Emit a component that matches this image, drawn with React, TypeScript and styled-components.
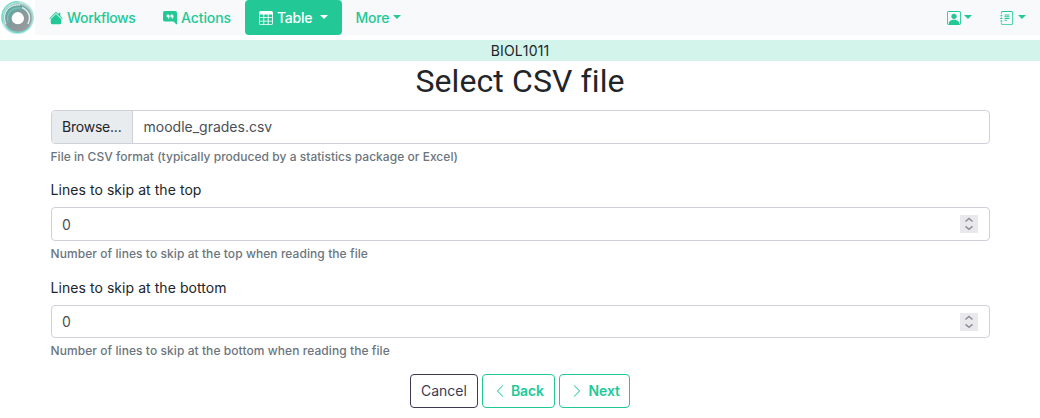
import React from "react";
import styled, { createGlobalStyle } from "styled-components";
import {
  BsHouseFill,
  BsChatRightQuoteFill,
  BsTable,
  BsPersonSquare,
  BsJournalText,
  BsChevronLeft,
  BsChevronRight,
} from "react-icons/bs";

const green = "#22c997";

const GlobalStyle = createGlobalStyle`
  *, *::before, *::after { box-sizing: border-box; }
  body {
    margin: 0;
    background: #fff;
    color: #212529;
    font: 400 14px/21px Inter, "Liberation Sans", sans-serif;
  }
`;

const Header = styled.header`
  display: flex;
  height: 35px;
  margin-bottom: 5px;
`;

const Brand = styled.a`
  width: 35px;
  height: 35px;
  svg { display: block; }
`;

const Nav = styled.nav`
  flex: 1;
  display: flex;
  background: #f8f9fa;
`;

const NavItem = styled.a<{ $active?: boolean; $width: number; $pad?: number; $track?: number }>`
  display: flex;
  align-items: center;
  width: ${(p) => p.$width}px;
  height: 35px;
  padding-left: ${(p) => p.$pad ?? 14}px;
  border-radius: 4px;
  color: ${(p) => (p.$active ? "#fff" : green)};
  background: ${(p) => (p.$active ? green : "transparent")};
  font-weight: 500;
  letter-spacing: ${(p) => p.$track ?? 0}px;
  white-space: nowrap;
  svg { flex: none; margin-right: 4px; }
`;

const Caret = styled.span<{ $gap: number }>`
  margin-left: ${(p) => p.$gap}px;
  margin-bottom: 1px;
  border-top: 4px solid currentColor;
  border-left: 4px solid transparent;
  border-right: 4px solid transparent;
`;

const NavEnd = styled.div`
  display: flex;
  margin-left: auto;
`;

const CourseBar = styled.div`
  height: 21px;
  background: #d3f4ea;
  text-align: center;
  letter-spacing: 0.15px;
  font-kerning: none;
`;

const Title = styled.h1`
  margin: 0 0 9px;
  padding-top: 1px;
  font: 400 32px/39px Roboto, sans-serif;
  letter-spacing: 0.1px;
  text-align: center;
`;

const Form = styled.form`
  margin: 0 50px 0 51px;
`;

const Field = styled.div<{ $height: number }>`
  height: ${(p) => p.$height}px;
`;

const Label = styled.label`
  display: block;
  height: 28px;
  line-height: 22px;
  letter-spacing: 0.06px;
  margin-left: -0.5px;
`;

const Control = styled.div<{ $height?: number }>`
  display: flex;
  align-items: center;
  height: ${(p) => p.$height ?? 34}px;
  border: 1px solid #ced0da;
  border-radius: 4px;
  overflow: hidden;
  color: #495057;
`;

const Browse = styled.span`
  align-self: stretch;
  display: flex;
  align-items: center;
  width: 81px;
  padding: 0 0 1px 10px;
  border-right: 1px solid #ced0da;
  background: #e9ecef;
  color: #212529;
  letter-spacing: -0.22px;
`;

const FileName = styled.span`
  flex: 1;
  padding: 0 0 1px 10.5px;
`;

const NumberValue = styled.span`
  flex: 1;
  padding-left: 10px;
`;

const Stepper = styled.span`
  display: flex;
  width: 18px;
  height: 18px;
  margin-right: 11px;
  background: #e9e9ed;
`;

const Help = styled.small<{ $track?: number }>`
  display: block;
  margin: 4px 0 0 -0.5px;
  color: #6c757d;
  font-size: 12px;
  font-weight: 500;
  line-height: 18px;
  letter-spacing: ${(p) => p.$track ?? 0.07}px;
`;

const Actions = styled.div`
  display: flex;
  justify-content: center;
  gap: 4px;
`;

const Button = styled.button<{ $primary?: boolean; $width: number; $gap?: number; $track?: number }>`
  display: flex;
  align-items: center;
  width: ${(p) => p.$width}px;
  height: 34px;
  padding: 0 0 1px 10px;
  border: 1px solid ${(p) => (p.$primary ? green : "#3b3b53")};
  border-radius: 4px;
  background: #fff;
  color: ${(p) => (p.$primary ? green : "#3b3b53")};
  font: inherit;
  font-weight: ${(p) => (p.$primary ? 600 : 400)};
  letter-spacing: ${(p) => p.$track ?? 0}px;
  svg { flex: none; margin-right: ${(p) => p.$gap ?? 4}px; }
`;

const Logo = () => (
  <svg width="35" height="35" viewBox="0 0 35 35" fill="none">
    <defs>
      <linearGradient id="ring" x1="0" y1="0" x2="1" y2="1">
        <stop offset="0" stopColor="#62aaa3" />
        <stop offset=".45" stopColor="#84999b" />
        <stop offset="1" stopColor="#9c999f" />
      </linearGradient>
    </defs>
    <circle cx="17.5" cy="17.5" r="15.6" stroke="#b4e6df" strokeWidth="1.8" />
    <circle cx="17.8" cy="17.8" r="14" stroke="#a5c8c5" strokeWidth="1.8" />
    <circle cx="18" cy="18.3" r="9.5" stroke="url(#ring)" strokeWidth="8" />
    <path d="M3 23C-1 11 8 1 19 2" stroke="#6eddcb" strokeWidth="1.2" />
    <path d="M6 24C1 12 10 4 20 5" stroke="#e2f8f4" strokeWidth="1" />
    <path d="M8 22C6 12 13 7 21 8" stroke="#70c9bd" strokeWidth="1.2" />
    <path d="M22 7.5C29 11 31 17 28 24" stroke="#c9fbf1" strokeWidth="1.5" />
    <path d="M6 26C11 34 23 35 30 26" stroke="#64d5c5" strokeWidth="1.2" />
    <circle cx="17.8" cy="18.2" r="6.1" fill="#fff" />
  </svg>
);

const Arrows = () => (
  <Stepper>
    <svg width="18" height="18" viewBox="0 0 18 18" fill="none" stroke="#8f8f9d" strokeWidth="1.6">
      <path d="M5.5 6.5L9 3.5l3.5 3M5.5 11.3l3.5 3 3.5-3" />
    </svg>
  </Stepper>
);

export default function App() {
  return (
    <>
      <GlobalStyle />
      <Header>
        <Brand><Logo /></Brand>
        <Nav>
          <NavItem $width={114} $track={-0.32}><BsHouseFill size={14} />Workflows</NavItem>
          <NavItem $width={96} $track={-0.08}><BsChatRightQuoteFill size={14} />Actions</NavItem>
          <NavItem $active $width={97} $track={-0.25}><BsTable size={14} />Table<Caret $gap={8} /></NavItem>
          <NavItem $width={80} $pad={13.5} $track={-0.2}>More<Caret $gap={3.5} /></NavItem>
          <NavEnd>
            <NavItem $width={53.5} $pad={0}><BsPersonSquare size={14} /><Caret $gap={-0.5} /></NavItem>
            <NavItem $width={40} $pad={0}><BsJournalText size={14} /><Caret $gap={0} /></NavItem>
          </NavEnd>
        </Nav>
      </Header>
      <CourseBar>BIOL1011</CourseBar>
      <Title>Select CSV file</Title>
      <Form>
        <Field $height={69}>
          <Control><Browse>Browse...</Browse><FileName>moodle_grades.csv</FileName></Control>
          <Help $track={0.03}>File in CSV format (typically produced by a statistics package or Excel)</Help>
        </Field>
        <Field $height={98}>
          <Label>Lines to skip at the top</Label>
          <Control><NumberValue>0</NumberValue><Arrows /></Control>
          <Help>Number of lines to skip at the top when reading the file</Help>
        </Field>
        <Field $height={97}>
          <Label>Lines to skip at the bottom</Label>
          <Control $height={33}><NumberValue>0</NumberValue><Arrows /></Control>
          <Help>Number of lines to skip at the bottom when reading the file</Help>
        </Field>
      </Form>
      <Actions>
        <Button $width={68}>Cancel</Button>
        <Button $primary $width={73} $track={-0.15}><BsChevronLeft size={14} />Back</Button>
        <Button $primary $width={71} $gap={4.5} $track={-0.1}><BsChevronRight size={14} />Next</Button>
      </Actions>
    </>
  );
}
